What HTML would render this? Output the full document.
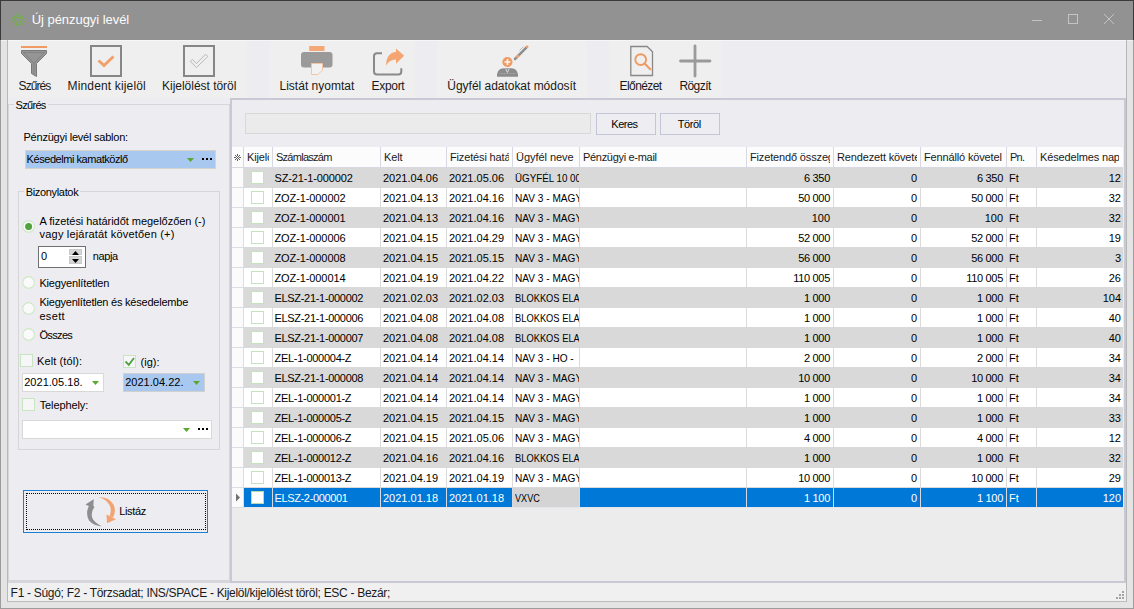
<!DOCTYPE html>
<html><head><meta charset="utf-8"><style>
html,body{margin:0;padding:0;}
body{width:1134px;height:609px;position:relative;overflow:hidden;font-family:"Liberation Sans", sans-serif;}
body>div,body>svg{position:absolute;}
.t{white-space:nowrap;line-height:20px;}
.c{white-space:nowrap;line-height:20px;height:20px;overflow:hidden;}
</style></head><body>
<div style="left:0px;top:0px;width:1134px;height:609px;background:#e4e4e4;"></div>
<div style="left:0px;top:0px;width:1134px;height:40px;background:#929292;"></div>
<div style="left:0px;top:0px;width:1px;height:40px;background:#3a3a3a;"></div>
<div style="left:1133px;top:0px;width:1px;height:40px;background:#3a3a3a;"></div>
<div style="left:0px;top:0px;width:1134px;height:1px;background:#3a3a3a;"></div>
<div style="left:0px;top:40px;width:1px;height:569px;background:#9c9c9c;"></div>
<div style="left:1133px;top:40px;width:1px;height:569px;background:#9c9c9c;"></div>
<div style="left:0px;top:608px;width:1134px;height:1px;background:#9c9c9c;"></div>
<div style="left:1px;top:40px;width:1132px;height:1px;background:#f2f2f2;"></div>
<div style="left:7px;top:40px;width:1px;height:562px;background:#b8b8b8;"></div>
<div style="left:1126px;top:40px;width:1px;height:562px;background:#b8b8b8;"></div>
<div style="left:7px;top:601px;width:1120px;height:1px;background:#bcbcbc;"></div>
<svg style="left:10px;top:12px;width:16px;height:16px" width="16" height="16" viewBox="10 12 16 16">
<g fill="#6cb33f"><circle cx="16.6" cy="14.4" r="0.9"/><circle cx="19.6" cy="14.4" r="0.9"/>
<circle cx="11.9" cy="21.6" r="0.9"/><circle cx="13.5" cy="24.1" r="0.9"/><circle cx="23.9" cy="21.6" r="0.9"/><circle cx="22.4" cy="24.1" r="0.9"/></g>
<g fill="none" stroke="#6cb33f" stroke-width="1.3" stroke-linecap="round">
<path d="M13.6 16.4 Q18 19.2 22.6 16.4"/>
<path d="M11.9 18.5 Q16.3 19.8 16.5 25.3"/>
<path d="M24 18.5 Q19.6 19.8 19.4 25.3"/>
</g></svg>
<div class="t" style="left:31.7px;top:9.50px;font-size:13px;color:#fcfcfc;letter-spacing:-0.044px;">Új pénzugyi levél</div>
<div style="left:1032px;top:20px;width:10px;height:1px;background:#c4c4c4;"></div>
<div style="left:1068px;top:14px;width:10px;height:10px;border:1px solid #c4c4c4;box-sizing:border-box;"></div>
<svg style="left:1103px;top:13px;width:12px;height:12px" width="12" height="12" viewBox="0 0 12 12"><path d="M1 1L11 11M11 1L1 11" stroke="#c4c4c4" stroke-width="1"/></svg>
<div style="left:8px;top:41px;width:1118px;height:57px;background:#efefef;"></div>
<div style="left:8px;top:40px;width:1118px;height:1px;background:#f7f7f7;"></div>
<div style="left:247px;top:41px;width:22px;height:57px;background:#ededf1;"></div>
<div style="left:415px;top:41px;width:22px;height:57px;background:#ededf1;"></div>
<div style="left:587px;top:41px;width:22px;height:57px;background:#ededf1;"></div>
<div style="left:722px;top:41px;width:404px;height:57px;background:#ededf1;"></div>
<div class="t" style="left:18.6px;top:75.84px;font-size:12px;color:#1a1a1a;letter-spacing:-0.920px;">Szűrés</div>
<div class="t" style="left:67.5px;top:75.84px;font-size:12px;color:#1a1a1a;letter-spacing:0.157px;">Mindent kijelöl</div>
<div class="t" style="left:162px;top:75.84px;font-size:12px;color:#1a1a1a;letter-spacing:-0.020px;">Kijelölést töröl</div>
<div class="t" style="left:279.5px;top:75.84px;font-size:12px;color:#1a1a1a;letter-spacing:0.008px;">Listát nyomtat</div>
<div class="t" style="left:371.5px;top:75.84px;font-size:12px;color:#1a1a1a;letter-spacing:-0.300px;">Export</div>
<div class="t" style="left:447.3px;top:75.84px;font-size:12px;color:#1a1a1a;letter-spacing:-0.023px;">Ügyfél adatokat módosít</div>
<div class="t" style="left:619.5px;top:75.84px;font-size:12px;color:#1a1a1a;letter-spacing:-0.571px;">Előnézet</div>
<div class="t" style="left:679.4px;top:75.84px;font-size:12px;color:#1a1a1a;letter-spacing:-0.560px;">Rögzít</div>
<svg style="left:0;top:0;width:1134px;height:98px" width="1134" height="98" viewBox="0 0 1134 98">
<!-- funnel -->
<rect x="21" y="46" width="26" height="2" fill="#f09a66"/>
<path d="M21.5 50.5 H46.5 V53.5 L36.5 63.5 V76.5 L31.5 73.5 V63.5 L21.5 53.5 Z" fill="#959595" stroke="#787878" stroke-width="1"/>
<path d="M23.5 52.5 H44.5 L34 63 V74" fill="none" stroke="#828282" stroke-width="1"/>
<path d="M23.5 52.5 L34 63" fill="none" stroke="#828282" stroke-width="1"/>
<!-- check 1 -->
<rect x="91" y="46" width="30" height="30" fill="none" stroke="#868686" stroke-width="2"/>
<path d="M98.5 60.5 L104 65.5 L113.5 56.5" fill="none" stroke="#f2a06c" stroke-width="3"/>
<!-- check 2 -->
<rect x="184" y="46" width="30" height="30" fill="none" stroke="#868686" stroke-width="2"/>
<path d="M190.3 61.4 L196.4 67.6 L207.8 56.5 L205.6 54.2 L196.4 63.6 L192.5 59.5 Z" fill="none" stroke="#b8b8b8" stroke-width="1"/>
<!-- printer -->
<rect x="309.2" y="46" width="15.3" height="5" fill="#f4a777"/>
<rect x="301" y="52" width="31.5" height="15.5" rx="3" fill="#9a9a9a"/>
<path d="M311.5 63.5 H322.5 V70 L318 74.5 H311.5 Z" fill="#f2f2f2" stroke="#f5c4a2" stroke-width="1"/>
<!-- export -->
<path d="M382 53.2 H377 Q374 53.2 374 56.2 V71.5 Q374 74.5 377 74.5 H398.3 Q401.3 74.5 401.3 71.5 V68.3" fill="none" stroke="#8a8a8a" stroke-width="2"/>
<path d="M396 48.5 L404.2 55.8 L396 63.8 V59.5 Q389.5 59.5 386 65.5 Q386.5 52.5 396 52 Z" fill="#f4a572"/>
<!-- person with pen -->
<path d="M497 76.8 Q496.8 70.5 501 68.8 Q502 68.3 504 68.3 H511 Q513 68.3 514 68.8 Q518.2 70.5 518 76.8 Z" fill="#8c8c8c"/>
<path d="M505.6 68.5 L507.4 72.5 L509.2 68.5" fill="none" stroke="#d8d8d8" stroke-width="1"/>
<path d="M499.5 73.5 H515.5" stroke="#9c9c9c" stroke-width="1"/>
<circle cx="507.4" cy="62" r="5.1" fill="#f09a62"/>
<path d="M504.5 62 H510.5 M507.5 59 V65" stroke="#fff3ea" stroke-width="1.7"/>
<path d="M515 59 L526.8 47.2" stroke="#8e8e8e" stroke-width="2.5" stroke-linecap="round"/>
<path d="M516.4 57.6 L518.8 55.2" stroke="#f0a070" stroke-width="2.5"/>
<circle cx="527.2" cy="46.8" r="1.3" fill="#f0a070"/>
<path d="M519.5 50.5 L523.5 46.5" stroke="#b0b0b0" stroke-width="0.8"/>
<!-- preview doc -->
<path d="M630.8 46.5 H647.2 L652.5 51.8 V75.5 H630.8 Z" fill="none" stroke="#888" stroke-width="1.3"/>
<circle cx="640.7" cy="59.6" r="5.4" fill="none" stroke="#f09a62" stroke-width="1.9"/>
<path d="M644.6 63.6 L650.3 69.3" stroke="#f09a62" stroke-width="2.1" stroke-linecap="round"/>
<!-- plus -->
<path d="M680.5 61 H710 M695 46 V76" stroke="#9a9a9a" stroke-width="2.8" stroke-linecap="round"/>
</svg>
<div style="left:8px;top:98px;width:1118px;height:483px;background:#ededf1;"></div>
<div style="left:8px;top:581px;width:1118px;height:2px;background:#d6d6de;"></div>
<div style="left:8px;top:583px;width:1118px;height:18px;background:#f0f0f0;"></div>
<div class="t" style="left:10.6px;top:582.84px;font-size:12px;color:#1a1a1a;letter-spacing:-0.297px;">F1 - Súgó; F2 - Törzsadat; INS/SPACE - Kijelöl/kijelölést töröl; ESC - Bezár;</div>
<div style="left:1122px;top:591px;width:2px;height:2px;background:#a4a4a4;"></div>
<div style="left:1119px;top:594px;width:2px;height:2px;background:#a4a4a4;"></div>
<div style="left:1122px;top:594px;width:2px;height:2px;background:#a4a4a4;"></div>
<div style="left:1116px;top:597px;width:2px;height:2px;background:#a4a4a4;"></div>
<div style="left:1119px;top:597px;width:2px;height:2px;background:#a4a4a4;"></div>
<div style="left:1122px;top:597px;width:2px;height:2px;background:#a4a4a4;"></div>
<div style="left:8px;top:104px;width:222px;height:477px;border:1px solid #d6d6d6;box-sizing:border-box;"></div>
<div style="left:14px;top:99px;width:34px;height:10px;background:#ededf1;"></div>
<div class="t" style="left:15.6px;top:95.19px;font-size:11px;color:#000;letter-spacing:-0.700px;">Szűrés</div>
<div class="t" style="left:23.5px;top:127.19px;font-size:11px;color:#000;letter-spacing:-0.229px;">Pénzügyi levél sablon:</div>
<div style="left:25px;top:150px;width:191px;height:19px;background:#a8c8f0;border:1px solid #d6d2cc;box-sizing:border-box;"></div>
<div class="t" style="left:26.6px;top:149.19px;font-size:11px;color:#000;letter-spacing:-0.447px;">Késedelmi kamatközlő</div>
<svg style="left:186px;top:157px;width:9px;height:6px" width="9" height="6" viewBox="0 0 9 6"><path d="M1 1H8L4.5 5Z" fill="#5aa832"/></svg>
<div style="left:202px;top:158px;width:2px;height:2px;background:#000;"></div>
<div style="left:206px;top:158px;width:2px;height:2px;background:#000;"></div>
<div style="left:210px;top:158px;width:2px;height:2px;background:#000;"></div>
<div style="left:18px;top:191px;width:202px;height:259px;border:1px solid #d6d6d6;box-sizing:border-box;"></div>
<div style="left:24px;top:185px;width:56px;height:10px;background:#ededf1;"></div>
<div class="t" style="left:25.7px;top:182.19px;font-size:11px;color:#000;letter-spacing:-0.330px;">Bizonylatok</div>
<svg style="left:21px;top:219px;width:16px;height:16px" width="16" height="16" viewBox="0 0 16 16"><circle cx="7.60" cy="7.40" r="5.8" fill="#fafafa" stroke="#cce8c4" stroke-width="1.1"/><circle cx="7.60" cy="7.40" r="3.5" fill="#52a23e"/></svg>
<div class="t" style="left:39.6px;top:210.69px;font-size:11px;color:#000;letter-spacing:-0.035px;">A fizetési határidőt megelőzően (-)</div>
<div class="t" style="left:39.6px;top:223.69px;font-size:11px;color:#000;letter-spacing:0.185px;">vagy lejáratát követően (+)</div>
<div style="left:38px;top:246px;width:48px;height:22px;background:#fff;border:1px solid #707070;box-sizing:border-box;"></div>
<div style="left:69px;top:249px;width:13px;height:6px;background:#d6d6d6;border:1px solid #cacaca;box-sizing:border-box;"></div>
<div style="left:69px;top:256px;width:13px;height:8px;background:#d6d6d6;border:1px solid #cacaca;box-sizing:border-box;"></div>
<svg style="left:69px;top:249px;width:13px;height:15px" width="13" height="15" viewBox="69 249 13 15"><path d="M72 255H79L75.5 251Z" fill="#000"/><path d="M72 259H79L75.5 263Z" fill="#000"/></svg>
<div class="t" style="left:41px;top:246.19px;font-size:11px;color:#000;">0</div>
<div class="t" style="left:92.7px;top:246.19px;font-size:11px;color:#000;letter-spacing:-0.375px;">napja</div>
<svg style="left:21px;top:275px;width:16px;height:16px" width="16" height="16" viewBox="0 0 16 16"><circle cx="7.60" cy="7.40" r="5.8" fill="#fafafa" stroke="#cce8c4" stroke-width="1.1"/></svg>
<div class="t" style="left:39.4px;top:273.19px;font-size:11px;color:#000;letter-spacing:-0.157px;">Kiegyenlítetlen</div>
<svg style="left:21px;top:301px;width:16px;height:16px" width="16" height="16" viewBox="0 0 16 16"><circle cx="7.60" cy="7.40" r="5.8" fill="#fafafa" stroke="#cce8c4" stroke-width="1.1"/></svg>
<div class="t" style="left:39.4px;top:292.19px;font-size:11px;color:#000;letter-spacing:-0.221px;">Kiegyenlítetlen és késedelembe</div>
<div class="t" style="left:39.4px;top:306.19px;font-size:11px;color:#000;letter-spacing:0.350px;">esett</div>
<svg style="left:21px;top:327px;width:16px;height:16px" width="16" height="16" viewBox="0 0 16 16"><circle cx="7.60" cy="7.40" r="5.8" fill="#fafafa" stroke="#cce8c4" stroke-width="1.1"/></svg>
<div class="t" style="left:39.4px;top:325.19px;font-size:11px;color:#000;letter-spacing:-0.640px;">Összes</div>
<div style="left:20px;top:354px;width:13px;height:13px;background:#f6f6f8;border:1px solid #c8e4c0;box-sizing:border-box;"></div>
<div class="t" style="left:37px;top:351.19px;font-size:11px;color:#000;letter-spacing:0.100px;">Kelt (tól):</div>
<div style="left:123px;top:355px;width:13px;height:13px;background:#f6f6f8;border:1px solid #c8e4c0;box-sizing:border-box;"></div>
<svg style="left:123px;top:355px;width:13px;height:13px" width="13" height="13" viewBox="123 355 13 13"><path d="M125.5 361.5L128.8 364.8L134 358" fill="none" stroke="#4ca43c" stroke-width="1.8"/></svg>
<div class="t" style="left:140.6px;top:352.19px;font-size:11px;color:#000;letter-spacing:0.000px;">(ig):</div>
<div style="left:22px;top:373px;width:82px;height:19px;background:#fff;border:1px solid #d8d8d8;box-sizing:border-box;"></div>
<div class="t" style="left:24.2px;top:372.19px;font-size:11px;color:#000;letter-spacing:0.030px;">2021.05.18.</div>
<svg style="left:91px;top:380px;width:9px;height:6px" width="9" height="6" viewBox="0 0 9 6"><path d="M1 1H8L4.5 5Z" fill="#5aa832"/></svg>
<div style="left:123px;top:373px;width:82px;height:19px;background:#a8c8f0;border:1px solid #d0d0d0;box-sizing:border-box;"></div>
<div class="t" style="left:125.2px;top:372.19px;font-size:11px;color:#000;letter-spacing:0.020px;">2021.04.22.</div>
<svg style="left:192px;top:380px;width:9px;height:6px" width="9" height="6" viewBox="0 0 9 6"><path d="M1 1H8L4.5 5Z" fill="#5aa832"/></svg>
<div style="left:22px;top:398px;width:13px;height:13px;background:#f6f6f8;border:1px solid #c8e4c0;box-sizing:border-box;"></div>
<div class="t" style="left:39.7px;top:395.19px;font-size:11px;color:#000;letter-spacing:-0.111px;">Telephely:</div>
<div style="left:22px;top:420px;width:190px;height:19px;background:#fff;border:1px solid #d8d8d8;box-sizing:border-box;"></div>
<svg style="left:182px;top:427px;width:9px;height:6px" width="9" height="6" viewBox="0 0 9 6"><path d="M1 1H8L4.5 5Z" fill="#5aa832"/></svg>
<div style="left:198px;top:428px;width:2px;height:2px;background:#000;"></div>
<div style="left:202px;top:428px;width:2px;height:2px;background:#000;"></div>
<div style="left:206px;top:428px;width:2px;height:2px;background:#000;"></div>
<div style="left:23px;top:490px;width:185px;height:43px;border:1px solid #1c7fd6;box-sizing:border-box;background:#ededf1;"></div>
<div style="left:26px;top:493px;width:180px;height:37px;border:1px dotted #000;box-sizing:border-box;"></div>
<svg style="left:84px;top:495px;width:34px;height:32px" width="34" height="32" viewBox="84 495 34 32">
<path d="M90.5 503.5 Q84.5 512 89 520.5 Q94 526.2 102 526.2 Q95.5 523.5 92.8 519 Q90 513 94.5 507 Z" fill="#8e8e8e"/>
<path d="M85.5 504.5 L93.7 499.2 L93.2 508.2 Z" fill="#8e8e8e"/>
<path d="M98.5 497.3 Q108.5 496.5 113.5 504.5 Q116.5 510.5 113 517.5 L109.5 516 Q112 510.5 109.5 505 Q106 499 98.5 497.3 Z" fill="#f2a372"/>
<path d="M107 523.3 L116 519.2 L106.5 514.5 Z" fill="#f2a372"/>
</svg>
<div class="t" style="left:119.3px;top:501.19px;font-size:11px;color:#000;letter-spacing:-0.380px;">Listáz</div>
<div style="left:230px;top:98px;width:896px;height:485px;background:#ececec;"></div>
<div style="left:230px;top:98px;width:896px;height:2px;background:#c9c9d5;"></div>
<div style="left:230px;top:98px;width:2px;height:485px;background:#c9c9d5;"></div>
<div style="left:1124px;top:98px;width:2px;height:485px;background:#c9c9d5;"></div>
<div style="left:230px;top:581px;width:896px;height:2px;background:#c9c9d5;"></div>
<div style="left:232px;top:100px;width:892px;height:47px;background:#ededf1;"></div>
<div style="left:245px;top:113px;width:346px;height:21px;background:#ebebeb;border:1px solid #d8d8d8;box-sizing:border-box;"></div>
<div style="left:596px;top:113px;width:60px;height:22px;background:#ededf2;border:1px solid #c4c6d8;box-sizing:border-box;"></div>
<div class="t" style="left:611.3px;top:114.19px;font-size:11px;color:#000;letter-spacing:-0.500px;">Keres</div>
<div style="left:660px;top:113px;width:60px;height:22px;background:#ededf2;border:1px solid #c4c6d8;box-sizing:border-box;"></div>
<div class="t" style="left:677.7px;top:114.19px;font-size:11px;color:#000;letter-spacing:-0.375px;">Töröl</div>
<div style="left:232px;top:147px;width:891px;height:20px;background:#fcfcfd;"></div>
<div style="left:232px;top:167px;width:891px;height:1px;background:#d8d8e2;"></div>
<div style="left:243px;top:147px;width:1px;height:20px;background:#d8d8e2;"></div>
<div style="left:272px;top:147px;width:1px;height:20px;background:#d8d8e2;"></div>
<div style="left:380px;top:147px;width:1px;height:20px;background:#d8d8e2;"></div>
<div style="left:446px;top:147px;width:1px;height:20px;background:#d8d8e2;"></div>
<div style="left:512px;top:147px;width:1px;height:20px;background:#d8d8e2;"></div>
<div style="left:579px;top:147px;width:1px;height:20px;background:#d8d8e2;"></div>
<div style="left:746px;top:147px;width:1px;height:20px;background:#d8d8e2;"></div>
<div style="left:833px;top:147px;width:1px;height:20px;background:#d8d8e2;"></div>
<div style="left:920px;top:147px;width:1px;height:20px;background:#d8d8e2;"></div>
<div style="left:1006px;top:147px;width:1px;height:20px;background:#d8d8e2;"></div>
<div style="left:1036px;top:147px;width:1px;height:20px;background:#d8d8e2;"></div>
<div class="c" style="left:244px;top:147.19px;width:25px;font-size:11px;color:#1a1a1a;"><span style="position:absolute;left:3px;top:0;letter-spacing:-0.15px;">Kijelölés</span></div>
<div class="c" style="left:273px;top:147.19px;width:104px;font-size:11px;color:#1a1a1a;"><span style="position:absolute;left:3px;top:0;letter-spacing:-0.733px;">Számlaszám</span></div>
<div class="c" style="left:381px;top:147.19px;width:62px;font-size:11px;color:#1a1a1a;"><span style="position:absolute;left:3px;top:0;letter-spacing:-0.133px;">Kelt</span></div>
<div class="c" style="left:447px;top:147.19px;width:62px;font-size:11px;color:#1a1a1a;"><span style="position:absolute;left:3px;top:0;letter-spacing:-0.15px;">Fizetési határidő</span></div>
<div class="c" style="left:513px;top:147.19px;width:63px;font-size:11px;color:#1a1a1a;"><span style="position:absolute;left:3px;top:0;letter-spacing:-0.050px;">Ügyfél neve</span></div>
<div class="c" style="left:580px;top:147.19px;width:163px;font-size:11px;color:#1a1a1a;"><span style="position:absolute;left:3px;top:0;letter-spacing:-0.307px;">Pénzügyi e-mail</span></div>
<div class="c" style="left:747px;top:147.19px;width:83px;font-size:11px;color:#1a1a1a;"><span style="position:absolute;left:3px;top:0;letter-spacing:-0.15px;">Fizetendő összeg</span></div>
<div class="c" style="left:834px;top:147.19px;width:83px;font-size:11px;color:#1a1a1a;"><span style="position:absolute;left:3px;top:0;letter-spacing:-0.15px;">Rendezett követelés</span></div>
<div class="c" style="left:921px;top:147.19px;width:83px;font-size:11px;color:#1a1a1a;"><span style="position:absolute;left:3px;top:0;letter-spacing:-0.15px;">Fennálló követel</span></div>
<div class="c" style="left:1007px;top:147.19px;width:26px;font-size:11px;color:#1a1a1a;"><span style="position:absolute;left:3px;top:0;letter-spacing:-0.750px;">Pn.</span></div>
<div class="c" style="left:1037px;top:147.19px;width:82px;font-size:11px;color:#1a1a1a;"><span style="position:absolute;left:3px;top:0;letter-spacing:-0.15px;">Késedelmes napok</span></div>
<svg style="left:233px;top:153px;width:9px;height:9px" width="9" height="9" viewBox="0 0 9 9" shape-rendering="crispEdges"><g fill="#5e5e5e"><rect x="4" y="1" width="1" height="1"/><rect x="2" y="2" width="1" height="1"/><rect x="4" y="2" width="1" height="1"/><rect x="6" y="2" width="1" height="1"/><rect x="3" y="3" width="1" height="1"/><rect x="5" y="3" width="1" height="1"/><rect x="1" y="4" width="1" height="1"/><rect x="2" y="4" width="1" height="1"/><rect x="4" y="4" width="1" height="1"/><rect x="6" y="4" width="1" height="1"/><rect x="7" y="4" width="1" height="1"/><rect x="3" y="5" width="1" height="1"/><rect x="5" y="5" width="1" height="1"/><rect x="2" y="6" width="1" height="1"/><rect x="4" y="6" width="1" height="1"/><rect x="6" y="6" width="1" height="1"/><rect x="4" y="7" width="1" height="1"/></g></svg>
<div style="left:232px;top:168px;width:11px;height:19px;background:#fbfbfc;"></div>
<div style="left:232px;top:187px;width:11px;height:1px;background:#dcdce6;"></div>
<div style="left:243px;top:168px;width:1px;height:20px;background:#dcdce6;"></div>
<div style="left:244px;top:168px;width:879px;height:20px;background:#d9d9d9;"></div>
<div style="left:244px;top:187px;width:879px;height:1px;background:#d9d9d9;"></div>
<div style="left:251px;top:171px;width:13px;height:13px;background:#fff;border:1px solid #c4e2bc;box-sizing:border-box;"></div>
<div class="c" style="left:273px;top:168.19px;width:107px;font-size:11px;color:#000;"><span style="position:absolute;left:1.5px;top:0;letter-spacing:-0.13px;">SZ-21-1-000002</span></div>
<div class="c" style="left:381px;top:168.19px;width:65px;font-size:11px;color:#000;"><span style="position:absolute;left:2px;top:0;">2021.04.06</span></div>
<div class="c" style="left:447px;top:168.19px;width:65px;font-size:11px;color:#000;"><span style="position:absolute;left:2px;top:0;">2021.05.06</span></div>
<div class="c" style="left:513px;top:168.19px;width:66px;font-size:11px;color:#000;"><span style="position:absolute;left:2px;top:0;transform:scaleX(0.888235294117647);transform-origin:0 0;">ÜGYFÉL 10 000</span></div>
<div class="c" style="left:747px;top:168.19px;width:86px;font-size:11px;color:#000;"><span style="position:absolute;right:3px;top:0;letter-spacing:-0.3px;">6 350</span></div>
<div class="c" style="left:834px;top:168.19px;width:86px;font-size:11px;color:#000;"><span style="position:absolute;right:3px;top:0;">0</span></div>
<div class="c" style="left:921px;top:168.19px;width:85px;font-size:11px;color:#000;"><span style="position:absolute;right:3px;top:0;letter-spacing:-0.3px;">6 350</span></div>
<div class="c" style="left:1007px;top:168.19px;width:29px;font-size:11px;color:#000;"><span style="position:absolute;left:2px;top:0;">Ft</span></div>
<div class="c" style="left:1037px;top:168.19px;width:86px;font-size:11px;color:#000;"><span style="position:absolute;right:2px;top:0;">12</span></div>
<div style="left:232px;top:188px;width:11px;height:19px;background:#fbfbfc;"></div>
<div style="left:232px;top:207px;width:11px;height:1px;background:#dcdce6;"></div>
<div style="left:243px;top:188px;width:1px;height:20px;background:#dcdce6;"></div>
<div style="left:244px;top:188px;width:879px;height:20px;background:#ffffff;"></div>
<div style="left:244px;top:207px;width:879px;height:1px;background:#d9d9d9;"></div>
<div style="left:272px;top:188px;width:1px;height:19px;background:#dadada;"></div>
<div style="left:380px;top:188px;width:1px;height:19px;background:#dadada;"></div>
<div style="left:446px;top:188px;width:1px;height:19px;background:#dadada;"></div>
<div style="left:512px;top:188px;width:1px;height:19px;background:#dadada;"></div>
<div style="left:579px;top:188px;width:1px;height:19px;background:#dadada;"></div>
<div style="left:746px;top:188px;width:1px;height:19px;background:#dadada;"></div>
<div style="left:833px;top:188px;width:1px;height:19px;background:#dadada;"></div>
<div style="left:920px;top:188px;width:1px;height:19px;background:#dadada;"></div>
<div style="left:1006px;top:188px;width:1px;height:19px;background:#dadada;"></div>
<div style="left:1036px;top:188px;width:1px;height:19px;background:#dadada;"></div>
<div style="left:251px;top:191px;width:13px;height:13px;background:#fff;border:1px solid #c4e2bc;box-sizing:border-box;"></div>
<div class="c" style="left:273px;top:188.19px;width:107px;font-size:11px;color:#000;"><span style="position:absolute;left:1.5px;top:0;letter-spacing:-0.1px;">ZOZ-1-000002</span></div>
<div class="c" style="left:381px;top:188.19px;width:65px;font-size:11px;color:#000;"><span style="position:absolute;left:2px;top:0;">2021.04.13</span></div>
<div class="c" style="left:447px;top:188.19px;width:65px;font-size:11px;color:#000;"><span style="position:absolute;left:2px;top:0;">2021.04.16</span></div>
<div class="c" style="left:513px;top:188.19px;width:66px;font-size:11px;color:#000;"><span style="position:absolute;left:2px;top:0;transform:scaleX(0.9181818181818182);transform-origin:0 0;">NAV 3 - MAGYAR</span></div>
<div class="c" style="left:747px;top:188.19px;width:86px;font-size:11px;color:#000;"><span style="position:absolute;right:3px;top:0;letter-spacing:-0.3px;">50 000</span></div>
<div class="c" style="left:834px;top:188.19px;width:86px;font-size:11px;color:#000;"><span style="position:absolute;right:3px;top:0;">0</span></div>
<div class="c" style="left:921px;top:188.19px;width:85px;font-size:11px;color:#000;"><span style="position:absolute;right:3px;top:0;letter-spacing:-0.3px;">50 000</span></div>
<div class="c" style="left:1007px;top:188.19px;width:29px;font-size:11px;color:#000;"><span style="position:absolute;left:2px;top:0;">Ft</span></div>
<div class="c" style="left:1037px;top:188.19px;width:86px;font-size:11px;color:#000;"><span style="position:absolute;right:2px;top:0;">32</span></div>
<div style="left:232px;top:208px;width:11px;height:19px;background:#fbfbfc;"></div>
<div style="left:232px;top:227px;width:11px;height:1px;background:#dcdce6;"></div>
<div style="left:243px;top:208px;width:1px;height:20px;background:#dcdce6;"></div>
<div style="left:244px;top:208px;width:879px;height:20px;background:#d9d9d9;"></div>
<div style="left:244px;top:227px;width:879px;height:1px;background:#d9d9d9;"></div>
<div style="left:251px;top:211px;width:13px;height:13px;background:#fff;border:1px solid #c4e2bc;box-sizing:border-box;"></div>
<div class="c" style="left:273px;top:208.19px;width:107px;font-size:11px;color:#000;"><span style="position:absolute;left:1.5px;top:0;letter-spacing:-0.1px;">ZOZ-1-000001</span></div>
<div class="c" style="left:381px;top:208.19px;width:65px;font-size:11px;color:#000;"><span style="position:absolute;left:2px;top:0;">2021.04.13</span></div>
<div class="c" style="left:447px;top:208.19px;width:65px;font-size:11px;color:#000;"><span style="position:absolute;left:2px;top:0;">2021.04.16</span></div>
<div class="c" style="left:513px;top:208.19px;width:66px;font-size:11px;color:#000;"><span style="position:absolute;left:2px;top:0;transform:scaleX(0.9181818181818182);transform-origin:0 0;">NAV 3 - MAGYAR</span></div>
<div class="c" style="left:747px;top:208.19px;width:86px;font-size:11px;color:#000;"><span style="position:absolute;right:3px;top:0;">100</span></div>
<div class="c" style="left:834px;top:208.19px;width:86px;font-size:11px;color:#000;"><span style="position:absolute;right:3px;top:0;">0</span></div>
<div class="c" style="left:921px;top:208.19px;width:85px;font-size:11px;color:#000;"><span style="position:absolute;right:3px;top:0;">100</span></div>
<div class="c" style="left:1007px;top:208.19px;width:29px;font-size:11px;color:#000;"><span style="position:absolute;left:2px;top:0;">Ft</span></div>
<div class="c" style="left:1037px;top:208.19px;width:86px;font-size:11px;color:#000;"><span style="position:absolute;right:2px;top:0;">32</span></div>
<div style="left:232px;top:228px;width:11px;height:19px;background:#fbfbfc;"></div>
<div style="left:232px;top:247px;width:11px;height:1px;background:#dcdce6;"></div>
<div style="left:243px;top:228px;width:1px;height:20px;background:#dcdce6;"></div>
<div style="left:244px;top:228px;width:879px;height:20px;background:#ffffff;"></div>
<div style="left:244px;top:247px;width:879px;height:1px;background:#d9d9d9;"></div>
<div style="left:272px;top:228px;width:1px;height:19px;background:#dadada;"></div>
<div style="left:380px;top:228px;width:1px;height:19px;background:#dadada;"></div>
<div style="left:446px;top:228px;width:1px;height:19px;background:#dadada;"></div>
<div style="left:512px;top:228px;width:1px;height:19px;background:#dadada;"></div>
<div style="left:579px;top:228px;width:1px;height:19px;background:#dadada;"></div>
<div style="left:746px;top:228px;width:1px;height:19px;background:#dadada;"></div>
<div style="left:833px;top:228px;width:1px;height:19px;background:#dadada;"></div>
<div style="left:920px;top:228px;width:1px;height:19px;background:#dadada;"></div>
<div style="left:1006px;top:228px;width:1px;height:19px;background:#dadada;"></div>
<div style="left:1036px;top:228px;width:1px;height:19px;background:#dadada;"></div>
<div style="left:251px;top:231px;width:13px;height:13px;background:#fff;border:1px solid #c4e2bc;box-sizing:border-box;"></div>
<div class="c" style="left:273px;top:228.19px;width:107px;font-size:11px;color:#000;"><span style="position:absolute;left:1.5px;top:0;letter-spacing:-0.1px;">ZOZ-1-000006</span></div>
<div class="c" style="left:381px;top:228.19px;width:65px;font-size:11px;color:#000;"><span style="position:absolute;left:2px;top:0;">2021.04.15</span></div>
<div class="c" style="left:447px;top:228.19px;width:65px;font-size:11px;color:#000;"><span style="position:absolute;left:2px;top:0;">2021.04.29</span></div>
<div class="c" style="left:513px;top:228.19px;width:66px;font-size:11px;color:#000;"><span style="position:absolute;left:2px;top:0;transform:scaleX(0.9181818181818182);transform-origin:0 0;">NAV 3 - MAGYAR</span></div>
<div class="c" style="left:747px;top:228.19px;width:86px;font-size:11px;color:#000;"><span style="position:absolute;right:3px;top:0;letter-spacing:-0.3px;">52 000</span></div>
<div class="c" style="left:834px;top:228.19px;width:86px;font-size:11px;color:#000;"><span style="position:absolute;right:3px;top:0;">0</span></div>
<div class="c" style="left:921px;top:228.19px;width:85px;font-size:11px;color:#000;"><span style="position:absolute;right:3px;top:0;letter-spacing:-0.3px;">52 000</span></div>
<div class="c" style="left:1007px;top:228.19px;width:29px;font-size:11px;color:#000;"><span style="position:absolute;left:2px;top:0;">Ft</span></div>
<div class="c" style="left:1037px;top:228.19px;width:86px;font-size:11px;color:#000;"><span style="position:absolute;right:2px;top:0;">19</span></div>
<div style="left:232px;top:248px;width:11px;height:19px;background:#fbfbfc;"></div>
<div style="left:232px;top:267px;width:11px;height:1px;background:#dcdce6;"></div>
<div style="left:243px;top:248px;width:1px;height:20px;background:#dcdce6;"></div>
<div style="left:244px;top:248px;width:879px;height:20px;background:#d9d9d9;"></div>
<div style="left:244px;top:267px;width:879px;height:1px;background:#d9d9d9;"></div>
<div style="left:251px;top:251px;width:13px;height:13px;background:#fff;border:1px solid #c4e2bc;box-sizing:border-box;"></div>
<div class="c" style="left:273px;top:248.19px;width:107px;font-size:11px;color:#000;"><span style="position:absolute;left:1.5px;top:0;letter-spacing:-0.1px;">ZOZ-1-000008</span></div>
<div class="c" style="left:381px;top:248.19px;width:65px;font-size:11px;color:#000;"><span style="position:absolute;left:2px;top:0;">2021.04.15</span></div>
<div class="c" style="left:447px;top:248.19px;width:65px;font-size:11px;color:#000;"><span style="position:absolute;left:2px;top:0;">2021.05.15</span></div>
<div class="c" style="left:513px;top:248.19px;width:66px;font-size:11px;color:#000;"><span style="position:absolute;left:2px;top:0;transform:scaleX(0.9181818181818182);transform-origin:0 0;">NAV 3 - MAGYAR</span></div>
<div class="c" style="left:747px;top:248.19px;width:86px;font-size:11px;color:#000;"><span style="position:absolute;right:3px;top:0;letter-spacing:-0.3px;">56 000</span></div>
<div class="c" style="left:834px;top:248.19px;width:86px;font-size:11px;color:#000;"><span style="position:absolute;right:3px;top:0;">0</span></div>
<div class="c" style="left:921px;top:248.19px;width:85px;font-size:11px;color:#000;"><span style="position:absolute;right:3px;top:0;letter-spacing:-0.3px;">56 000</span></div>
<div class="c" style="left:1007px;top:248.19px;width:29px;font-size:11px;color:#000;"><span style="position:absolute;left:2px;top:0;">Ft</span></div>
<div class="c" style="left:1037px;top:248.19px;width:86px;font-size:11px;color:#000;"><span style="position:absolute;right:2px;top:0;">3</span></div>
<div style="left:232px;top:268px;width:11px;height:19px;background:#fbfbfc;"></div>
<div style="left:232px;top:287px;width:11px;height:1px;background:#dcdce6;"></div>
<div style="left:243px;top:268px;width:1px;height:20px;background:#dcdce6;"></div>
<div style="left:244px;top:268px;width:879px;height:20px;background:#ffffff;"></div>
<div style="left:244px;top:287px;width:879px;height:1px;background:#d9d9d9;"></div>
<div style="left:272px;top:268px;width:1px;height:19px;background:#dadada;"></div>
<div style="left:380px;top:268px;width:1px;height:19px;background:#dadada;"></div>
<div style="left:446px;top:268px;width:1px;height:19px;background:#dadada;"></div>
<div style="left:512px;top:268px;width:1px;height:19px;background:#dadada;"></div>
<div style="left:579px;top:268px;width:1px;height:19px;background:#dadada;"></div>
<div style="left:746px;top:268px;width:1px;height:19px;background:#dadada;"></div>
<div style="left:833px;top:268px;width:1px;height:19px;background:#dadada;"></div>
<div style="left:920px;top:268px;width:1px;height:19px;background:#dadada;"></div>
<div style="left:1006px;top:268px;width:1px;height:19px;background:#dadada;"></div>
<div style="left:1036px;top:268px;width:1px;height:19px;background:#dadada;"></div>
<div style="left:251px;top:271px;width:13px;height:13px;background:#fff;border:1px solid #c4e2bc;box-sizing:border-box;"></div>
<div class="c" style="left:273px;top:268.19px;width:107px;font-size:11px;color:#000;"><span style="position:absolute;left:1.5px;top:0;letter-spacing:-0.1px;">ZOZ-1-000014</span></div>
<div class="c" style="left:381px;top:268.19px;width:65px;font-size:11px;color:#000;"><span style="position:absolute;left:2px;top:0;">2021.04.19</span></div>
<div class="c" style="left:447px;top:268.19px;width:65px;font-size:11px;color:#000;"><span style="position:absolute;left:2px;top:0;">2021.04.22</span></div>
<div class="c" style="left:513px;top:268.19px;width:66px;font-size:11px;color:#000;"><span style="position:absolute;left:2px;top:0;transform:scaleX(0.9181818181818182);transform-origin:0 0;">NAV 3 - MAGYAR</span></div>
<div class="c" style="left:747px;top:268.19px;width:86px;font-size:11px;color:#000;"><span style="position:absolute;right:3px;top:0;letter-spacing:-0.3px;">110 005</span></div>
<div class="c" style="left:834px;top:268.19px;width:86px;font-size:11px;color:#000;"><span style="position:absolute;right:3px;top:0;">0</span></div>
<div class="c" style="left:921px;top:268.19px;width:85px;font-size:11px;color:#000;"><span style="position:absolute;right:3px;top:0;letter-spacing:-0.3px;">110 005</span></div>
<div class="c" style="left:1007px;top:268.19px;width:29px;font-size:11px;color:#000;"><span style="position:absolute;left:2px;top:0;">Ft</span></div>
<div class="c" style="left:1037px;top:268.19px;width:86px;font-size:11px;color:#000;"><span style="position:absolute;right:2px;top:0;">26</span></div>
<div style="left:232px;top:288px;width:11px;height:19px;background:#fbfbfc;"></div>
<div style="left:232px;top:307px;width:11px;height:1px;background:#dcdce6;"></div>
<div style="left:243px;top:288px;width:1px;height:20px;background:#dcdce6;"></div>
<div style="left:244px;top:288px;width:879px;height:20px;background:#d9d9d9;"></div>
<div style="left:244px;top:307px;width:879px;height:1px;background:#d9d9d9;"></div>
<div style="left:251px;top:291px;width:13px;height:13px;background:#fff;border:1px solid #c4e2bc;box-sizing:border-box;"></div>
<div class="c" style="left:273px;top:288.19px;width:107px;font-size:11px;color:#000;"><span style="position:absolute;left:1.5px;top:0;letter-spacing:-0.31px;">ELSZ-21-1-000002</span></div>
<div class="c" style="left:381px;top:288.19px;width:65px;font-size:11px;color:#000;"><span style="position:absolute;left:2px;top:0;">2021.02.03</span></div>
<div class="c" style="left:447px;top:288.19px;width:65px;font-size:11px;color:#000;"><span style="position:absolute;left:2px;top:0;">2021.02.03</span></div>
<div class="c" style="left:513px;top:288.19px;width:66px;font-size:11px;color:#000;"><span style="position:absolute;left:2px;top:0;transform:scaleX(0.8478260869565217);transform-origin:0 0;">BLOKKOS ELADÁS</span></div>
<div class="c" style="left:747px;top:288.19px;width:86px;font-size:11px;color:#000;"><span style="position:absolute;right:3px;top:0;letter-spacing:-0.3px;">1 000</span></div>
<div class="c" style="left:834px;top:288.19px;width:86px;font-size:11px;color:#000;"><span style="position:absolute;right:3px;top:0;">0</span></div>
<div class="c" style="left:921px;top:288.19px;width:85px;font-size:11px;color:#000;"><span style="position:absolute;right:3px;top:0;letter-spacing:-0.3px;">1 000</span></div>
<div class="c" style="left:1007px;top:288.19px;width:29px;font-size:11px;color:#000;"><span style="position:absolute;left:2px;top:0;">Ft</span></div>
<div class="c" style="left:1037px;top:288.19px;width:86px;font-size:11px;color:#000;"><span style="position:absolute;right:2px;top:0;">104</span></div>
<div style="left:232px;top:308px;width:11px;height:19px;background:#fbfbfc;"></div>
<div style="left:232px;top:327px;width:11px;height:1px;background:#dcdce6;"></div>
<div style="left:243px;top:308px;width:1px;height:20px;background:#dcdce6;"></div>
<div style="left:244px;top:308px;width:879px;height:20px;background:#ffffff;"></div>
<div style="left:244px;top:327px;width:879px;height:1px;background:#d9d9d9;"></div>
<div style="left:272px;top:308px;width:1px;height:19px;background:#dadada;"></div>
<div style="left:380px;top:308px;width:1px;height:19px;background:#dadada;"></div>
<div style="left:446px;top:308px;width:1px;height:19px;background:#dadada;"></div>
<div style="left:512px;top:308px;width:1px;height:19px;background:#dadada;"></div>
<div style="left:579px;top:308px;width:1px;height:19px;background:#dadada;"></div>
<div style="left:746px;top:308px;width:1px;height:19px;background:#dadada;"></div>
<div style="left:833px;top:308px;width:1px;height:19px;background:#dadada;"></div>
<div style="left:920px;top:308px;width:1px;height:19px;background:#dadada;"></div>
<div style="left:1006px;top:308px;width:1px;height:19px;background:#dadada;"></div>
<div style="left:1036px;top:308px;width:1px;height:19px;background:#dadada;"></div>
<div style="left:251px;top:311px;width:13px;height:13px;background:#fff;border:1px solid #c4e2bc;box-sizing:border-box;"></div>
<div class="c" style="left:273px;top:308.19px;width:107px;font-size:11px;color:#000;"><span style="position:absolute;left:1.5px;top:0;letter-spacing:-0.31px;">ELSZ-21-1-000006</span></div>
<div class="c" style="left:381px;top:308.19px;width:65px;font-size:11px;color:#000;"><span style="position:absolute;left:2px;top:0;">2021.04.08</span></div>
<div class="c" style="left:447px;top:308.19px;width:65px;font-size:11px;color:#000;"><span style="position:absolute;left:2px;top:0;">2021.04.08</span></div>
<div class="c" style="left:513px;top:308.19px;width:66px;font-size:11px;color:#000;"><span style="position:absolute;left:2px;top:0;transform:scaleX(0.8478260869565217);transform-origin:0 0;">BLOKKOS ELADÁS</span></div>
<div class="c" style="left:747px;top:308.19px;width:86px;font-size:11px;color:#000;"><span style="position:absolute;right:3px;top:0;letter-spacing:-0.3px;">1 000</span></div>
<div class="c" style="left:834px;top:308.19px;width:86px;font-size:11px;color:#000;"><span style="position:absolute;right:3px;top:0;">0</span></div>
<div class="c" style="left:921px;top:308.19px;width:85px;font-size:11px;color:#000;"><span style="position:absolute;right:3px;top:0;letter-spacing:-0.3px;">1 000</span></div>
<div class="c" style="left:1007px;top:308.19px;width:29px;font-size:11px;color:#000;"><span style="position:absolute;left:2px;top:0;">Ft</span></div>
<div class="c" style="left:1037px;top:308.19px;width:86px;font-size:11px;color:#000;"><span style="position:absolute;right:2px;top:0;">40</span></div>
<div style="left:232px;top:328px;width:11px;height:19px;background:#fbfbfc;"></div>
<div style="left:232px;top:347px;width:11px;height:1px;background:#dcdce6;"></div>
<div style="left:243px;top:328px;width:1px;height:20px;background:#dcdce6;"></div>
<div style="left:244px;top:328px;width:879px;height:20px;background:#d9d9d9;"></div>
<div style="left:244px;top:347px;width:879px;height:1px;background:#d9d9d9;"></div>
<div style="left:251px;top:331px;width:13px;height:13px;background:#fff;border:1px solid #c4e2bc;box-sizing:border-box;"></div>
<div class="c" style="left:273px;top:328.19px;width:107px;font-size:11px;color:#000;"><span style="position:absolute;left:1.5px;top:0;letter-spacing:-0.31px;">ELSZ-21-1-000007</span></div>
<div class="c" style="left:381px;top:328.19px;width:65px;font-size:11px;color:#000;"><span style="position:absolute;left:2px;top:0;">2021.04.08</span></div>
<div class="c" style="left:447px;top:328.19px;width:65px;font-size:11px;color:#000;"><span style="position:absolute;left:2px;top:0;">2021.04.08</span></div>
<div class="c" style="left:513px;top:328.19px;width:66px;font-size:11px;color:#000;"><span style="position:absolute;left:2px;top:0;transform:scaleX(0.8478260869565217);transform-origin:0 0;">BLOKKOS ELADÁS</span></div>
<div class="c" style="left:747px;top:328.19px;width:86px;font-size:11px;color:#000;"><span style="position:absolute;right:3px;top:0;letter-spacing:-0.3px;">1 000</span></div>
<div class="c" style="left:834px;top:328.19px;width:86px;font-size:11px;color:#000;"><span style="position:absolute;right:3px;top:0;">0</span></div>
<div class="c" style="left:921px;top:328.19px;width:85px;font-size:11px;color:#000;"><span style="position:absolute;right:3px;top:0;letter-spacing:-0.3px;">1 000</span></div>
<div class="c" style="left:1007px;top:328.19px;width:29px;font-size:11px;color:#000;"><span style="position:absolute;left:2px;top:0;">Ft</span></div>
<div class="c" style="left:1037px;top:328.19px;width:86px;font-size:11px;color:#000;"><span style="position:absolute;right:2px;top:0;">40</span></div>
<div style="left:232px;top:348px;width:11px;height:19px;background:#fbfbfc;"></div>
<div style="left:232px;top:367px;width:11px;height:1px;background:#dcdce6;"></div>
<div style="left:243px;top:348px;width:1px;height:20px;background:#dcdce6;"></div>
<div style="left:244px;top:348px;width:879px;height:20px;background:#ffffff;"></div>
<div style="left:244px;top:367px;width:879px;height:1px;background:#d9d9d9;"></div>
<div style="left:272px;top:348px;width:1px;height:19px;background:#dadada;"></div>
<div style="left:380px;top:348px;width:1px;height:19px;background:#dadada;"></div>
<div style="left:446px;top:348px;width:1px;height:19px;background:#dadada;"></div>
<div style="left:512px;top:348px;width:1px;height:19px;background:#dadada;"></div>
<div style="left:579px;top:348px;width:1px;height:19px;background:#dadada;"></div>
<div style="left:746px;top:348px;width:1px;height:19px;background:#dadada;"></div>
<div style="left:833px;top:348px;width:1px;height:19px;background:#dadada;"></div>
<div style="left:920px;top:348px;width:1px;height:19px;background:#dadada;"></div>
<div style="left:1006px;top:348px;width:1px;height:19px;background:#dadada;"></div>
<div style="left:1036px;top:348px;width:1px;height:19px;background:#dadada;"></div>
<div style="left:251px;top:351px;width:13px;height:13px;background:#fff;border:1px solid #c4e2bc;box-sizing:border-box;"></div>
<div class="c" style="left:273px;top:348.19px;width:107px;font-size:11px;color:#000;"><span style="position:absolute;left:1.5px;top:0;letter-spacing:-0.28px;">ZEL-1-000004-Z</span></div>
<div class="c" style="left:381px;top:348.19px;width:65px;font-size:11px;color:#000;"><span style="position:absolute;left:2px;top:0;">2021.04.14</span></div>
<div class="c" style="left:447px;top:348.19px;width:65px;font-size:11px;color:#000;"><span style="position:absolute;left:2px;top:0;">2021.04.14</span></div>
<div class="c" style="left:513px;top:348.19px;width:66px;font-size:11px;color:#000;"><span style="position:absolute;left:2px;top:0;transform:scaleX(0.9181818181818182);transform-origin:0 0;">NAV 3 - HO - </span></div>
<div class="c" style="left:747px;top:348.19px;width:86px;font-size:11px;color:#000;"><span style="position:absolute;right:3px;top:0;letter-spacing:-0.3px;">2 000</span></div>
<div class="c" style="left:834px;top:348.19px;width:86px;font-size:11px;color:#000;"><span style="position:absolute;right:3px;top:0;">0</span></div>
<div class="c" style="left:921px;top:348.19px;width:85px;font-size:11px;color:#000;"><span style="position:absolute;right:3px;top:0;letter-spacing:-0.3px;">2 000</span></div>
<div class="c" style="left:1007px;top:348.19px;width:29px;font-size:11px;color:#000;"><span style="position:absolute;left:2px;top:0;">Ft</span></div>
<div class="c" style="left:1037px;top:348.19px;width:86px;font-size:11px;color:#000;"><span style="position:absolute;right:2px;top:0;">34</span></div>
<div style="left:232px;top:368px;width:11px;height:19px;background:#fbfbfc;"></div>
<div style="left:232px;top:387px;width:11px;height:1px;background:#dcdce6;"></div>
<div style="left:243px;top:368px;width:1px;height:20px;background:#dcdce6;"></div>
<div style="left:244px;top:368px;width:879px;height:20px;background:#d9d9d9;"></div>
<div style="left:244px;top:387px;width:879px;height:1px;background:#d9d9d9;"></div>
<div style="left:251px;top:371px;width:13px;height:13px;background:#fff;border:1px solid #c4e2bc;box-sizing:border-box;"></div>
<div class="c" style="left:273px;top:368.19px;width:107px;font-size:11px;color:#000;"><span style="position:absolute;left:1.5px;top:0;letter-spacing:-0.31px;">ELSZ-21-1-000008</span></div>
<div class="c" style="left:381px;top:368.19px;width:65px;font-size:11px;color:#000;"><span style="position:absolute;left:2px;top:0;">2021.04.14</span></div>
<div class="c" style="left:447px;top:368.19px;width:65px;font-size:11px;color:#000;"><span style="position:absolute;left:2px;top:0;">2021.04.14</span></div>
<div class="c" style="left:513px;top:368.19px;width:66px;font-size:11px;color:#000;"><span style="position:absolute;left:2px;top:0;transform:scaleX(0.9181818181818182);transform-origin:0 0;">NAV 3 - MAGYAR</span></div>
<div class="c" style="left:747px;top:368.19px;width:86px;font-size:11px;color:#000;"><span style="position:absolute;right:3px;top:0;letter-spacing:-0.3px;">10 000</span></div>
<div class="c" style="left:834px;top:368.19px;width:86px;font-size:11px;color:#000;"><span style="position:absolute;right:3px;top:0;">0</span></div>
<div class="c" style="left:921px;top:368.19px;width:85px;font-size:11px;color:#000;"><span style="position:absolute;right:3px;top:0;letter-spacing:-0.3px;">10 000</span></div>
<div class="c" style="left:1007px;top:368.19px;width:29px;font-size:11px;color:#000;"><span style="position:absolute;left:2px;top:0;">Ft</span></div>
<div class="c" style="left:1037px;top:368.19px;width:86px;font-size:11px;color:#000;"><span style="position:absolute;right:2px;top:0;">34</span></div>
<div style="left:232px;top:388px;width:11px;height:19px;background:#fbfbfc;"></div>
<div style="left:232px;top:407px;width:11px;height:1px;background:#dcdce6;"></div>
<div style="left:243px;top:388px;width:1px;height:20px;background:#dcdce6;"></div>
<div style="left:244px;top:388px;width:879px;height:20px;background:#ffffff;"></div>
<div style="left:244px;top:407px;width:879px;height:1px;background:#d9d9d9;"></div>
<div style="left:272px;top:388px;width:1px;height:19px;background:#dadada;"></div>
<div style="left:380px;top:388px;width:1px;height:19px;background:#dadada;"></div>
<div style="left:446px;top:388px;width:1px;height:19px;background:#dadada;"></div>
<div style="left:512px;top:388px;width:1px;height:19px;background:#dadada;"></div>
<div style="left:579px;top:388px;width:1px;height:19px;background:#dadada;"></div>
<div style="left:746px;top:388px;width:1px;height:19px;background:#dadada;"></div>
<div style="left:833px;top:388px;width:1px;height:19px;background:#dadada;"></div>
<div style="left:920px;top:388px;width:1px;height:19px;background:#dadada;"></div>
<div style="left:1006px;top:388px;width:1px;height:19px;background:#dadada;"></div>
<div style="left:1036px;top:388px;width:1px;height:19px;background:#dadada;"></div>
<div style="left:251px;top:391px;width:13px;height:13px;background:#fff;border:1px solid #c4e2bc;box-sizing:border-box;"></div>
<div class="c" style="left:273px;top:388.19px;width:107px;font-size:11px;color:#000;"><span style="position:absolute;left:1.5px;top:0;letter-spacing:-0.28px;">ZEL-1-000001-Z</span></div>
<div class="c" style="left:381px;top:388.19px;width:65px;font-size:11px;color:#000;"><span style="position:absolute;left:2px;top:0;">2021.04.14</span></div>
<div class="c" style="left:447px;top:388.19px;width:65px;font-size:11px;color:#000;"><span style="position:absolute;left:2px;top:0;">2021.04.14</span></div>
<div class="c" style="left:513px;top:388.19px;width:66px;font-size:11px;color:#000;"><span style="position:absolute;left:2px;top:0;transform:scaleX(0.9181818181818182);transform-origin:0 0;">NAV 3 - MAGYAR</span></div>
<div class="c" style="left:747px;top:388.19px;width:86px;font-size:11px;color:#000;"><span style="position:absolute;right:3px;top:0;letter-spacing:-0.3px;">1 000</span></div>
<div class="c" style="left:834px;top:388.19px;width:86px;font-size:11px;color:#000;"><span style="position:absolute;right:3px;top:0;">0</span></div>
<div class="c" style="left:921px;top:388.19px;width:85px;font-size:11px;color:#000;"><span style="position:absolute;right:3px;top:0;letter-spacing:-0.3px;">1 000</span></div>
<div class="c" style="left:1007px;top:388.19px;width:29px;font-size:11px;color:#000;"><span style="position:absolute;left:2px;top:0;">Ft</span></div>
<div class="c" style="left:1037px;top:388.19px;width:86px;font-size:11px;color:#000;"><span style="position:absolute;right:2px;top:0;">34</span></div>
<div style="left:232px;top:408px;width:11px;height:19px;background:#fbfbfc;"></div>
<div style="left:232px;top:427px;width:11px;height:1px;background:#dcdce6;"></div>
<div style="left:243px;top:408px;width:1px;height:20px;background:#dcdce6;"></div>
<div style="left:244px;top:408px;width:879px;height:20px;background:#d9d9d9;"></div>
<div style="left:244px;top:427px;width:879px;height:1px;background:#d9d9d9;"></div>
<div style="left:251px;top:411px;width:13px;height:13px;background:#fff;border:1px solid #c4e2bc;box-sizing:border-box;"></div>
<div class="c" style="left:273px;top:408.19px;width:107px;font-size:11px;color:#000;"><span style="position:absolute;left:1.5px;top:0;letter-spacing:-0.28px;">ZEL-1-000005-Z</span></div>
<div class="c" style="left:381px;top:408.19px;width:65px;font-size:11px;color:#000;"><span style="position:absolute;left:2px;top:0;">2021.04.15</span></div>
<div class="c" style="left:447px;top:408.19px;width:65px;font-size:11px;color:#000;"><span style="position:absolute;left:2px;top:0;">2021.04.15</span></div>
<div class="c" style="left:513px;top:408.19px;width:66px;font-size:11px;color:#000;"><span style="position:absolute;left:2px;top:0;transform:scaleX(0.9181818181818182);transform-origin:0 0;">NAV 3 - MAGYAR</span></div>
<div class="c" style="left:747px;top:408.19px;width:86px;font-size:11px;color:#000;"><span style="position:absolute;right:3px;top:0;letter-spacing:-0.3px;">1 000</span></div>
<div class="c" style="left:834px;top:408.19px;width:86px;font-size:11px;color:#000;"><span style="position:absolute;right:3px;top:0;">0</span></div>
<div class="c" style="left:921px;top:408.19px;width:85px;font-size:11px;color:#000;"><span style="position:absolute;right:3px;top:0;letter-spacing:-0.3px;">1 000</span></div>
<div class="c" style="left:1007px;top:408.19px;width:29px;font-size:11px;color:#000;"><span style="position:absolute;left:2px;top:0;">Ft</span></div>
<div class="c" style="left:1037px;top:408.19px;width:86px;font-size:11px;color:#000;"><span style="position:absolute;right:2px;top:0;">33</span></div>
<div style="left:232px;top:428px;width:11px;height:19px;background:#fbfbfc;"></div>
<div style="left:232px;top:447px;width:11px;height:1px;background:#dcdce6;"></div>
<div style="left:243px;top:428px;width:1px;height:20px;background:#dcdce6;"></div>
<div style="left:244px;top:428px;width:879px;height:20px;background:#ffffff;"></div>
<div style="left:244px;top:447px;width:879px;height:1px;background:#d9d9d9;"></div>
<div style="left:272px;top:428px;width:1px;height:19px;background:#dadada;"></div>
<div style="left:380px;top:428px;width:1px;height:19px;background:#dadada;"></div>
<div style="left:446px;top:428px;width:1px;height:19px;background:#dadada;"></div>
<div style="left:512px;top:428px;width:1px;height:19px;background:#dadada;"></div>
<div style="left:579px;top:428px;width:1px;height:19px;background:#dadada;"></div>
<div style="left:746px;top:428px;width:1px;height:19px;background:#dadada;"></div>
<div style="left:833px;top:428px;width:1px;height:19px;background:#dadada;"></div>
<div style="left:920px;top:428px;width:1px;height:19px;background:#dadada;"></div>
<div style="left:1006px;top:428px;width:1px;height:19px;background:#dadada;"></div>
<div style="left:1036px;top:428px;width:1px;height:19px;background:#dadada;"></div>
<div style="left:251px;top:431px;width:13px;height:13px;background:#fff;border:1px solid #c4e2bc;box-sizing:border-box;"></div>
<div class="c" style="left:273px;top:428.19px;width:107px;font-size:11px;color:#000;"><span style="position:absolute;left:1.5px;top:0;letter-spacing:-0.28px;">ZEL-1-000006-Z</span></div>
<div class="c" style="left:381px;top:428.19px;width:65px;font-size:11px;color:#000;"><span style="position:absolute;left:2px;top:0;">2021.04.15</span></div>
<div class="c" style="left:447px;top:428.19px;width:65px;font-size:11px;color:#000;"><span style="position:absolute;left:2px;top:0;">2021.05.06</span></div>
<div class="c" style="left:513px;top:428.19px;width:66px;font-size:11px;color:#000;"><span style="position:absolute;left:2px;top:0;transform:scaleX(0.9181818181818182);transform-origin:0 0;">NAV 3 - MAGYAR</span></div>
<div class="c" style="left:747px;top:428.19px;width:86px;font-size:11px;color:#000;"><span style="position:absolute;right:3px;top:0;letter-spacing:-0.3px;">4 000</span></div>
<div class="c" style="left:834px;top:428.19px;width:86px;font-size:11px;color:#000;"><span style="position:absolute;right:3px;top:0;">0</span></div>
<div class="c" style="left:921px;top:428.19px;width:85px;font-size:11px;color:#000;"><span style="position:absolute;right:3px;top:0;letter-spacing:-0.3px;">4 000</span></div>
<div class="c" style="left:1007px;top:428.19px;width:29px;font-size:11px;color:#000;"><span style="position:absolute;left:2px;top:0;">Ft</span></div>
<div class="c" style="left:1037px;top:428.19px;width:86px;font-size:11px;color:#000;"><span style="position:absolute;right:2px;top:0;">12</span></div>
<div style="left:232px;top:448px;width:11px;height:19px;background:#fbfbfc;"></div>
<div style="left:232px;top:467px;width:11px;height:1px;background:#dcdce6;"></div>
<div style="left:243px;top:448px;width:1px;height:20px;background:#dcdce6;"></div>
<div style="left:244px;top:448px;width:879px;height:20px;background:#d9d9d9;"></div>
<div style="left:244px;top:467px;width:879px;height:1px;background:#d9d9d9;"></div>
<div style="left:251px;top:451px;width:13px;height:13px;background:#fff;border:1px solid #c4e2bc;box-sizing:border-box;"></div>
<div class="c" style="left:273px;top:448.19px;width:107px;font-size:11px;color:#000;"><span style="position:absolute;left:1.5px;top:0;letter-spacing:-0.28px;">ZEL-1-000012-Z</span></div>
<div class="c" style="left:381px;top:448.19px;width:65px;font-size:11px;color:#000;"><span style="position:absolute;left:2px;top:0;">2021.04.16</span></div>
<div class="c" style="left:447px;top:448.19px;width:65px;font-size:11px;color:#000;"><span style="position:absolute;left:2px;top:0;">2021.04.16</span></div>
<div class="c" style="left:513px;top:448.19px;width:66px;font-size:11px;color:#000;"><span style="position:absolute;left:2px;top:0;transform:scaleX(0.8478260869565217);transform-origin:0 0;">BLOKKOS ELADÁS</span></div>
<div class="c" style="left:747px;top:448.19px;width:86px;font-size:11px;color:#000;"><span style="position:absolute;right:3px;top:0;letter-spacing:-0.3px;">1 000</span></div>
<div class="c" style="left:834px;top:448.19px;width:86px;font-size:11px;color:#000;"><span style="position:absolute;right:3px;top:0;">0</span></div>
<div class="c" style="left:921px;top:448.19px;width:85px;font-size:11px;color:#000;"><span style="position:absolute;right:3px;top:0;letter-spacing:-0.3px;">1 000</span></div>
<div class="c" style="left:1007px;top:448.19px;width:29px;font-size:11px;color:#000;"><span style="position:absolute;left:2px;top:0;">Ft</span></div>
<div class="c" style="left:1037px;top:448.19px;width:86px;font-size:11px;color:#000;"><span style="position:absolute;right:2px;top:0;">32</span></div>
<div style="left:232px;top:468px;width:11px;height:19px;background:#fbfbfc;"></div>
<div style="left:232px;top:487px;width:11px;height:1px;background:#dcdce6;"></div>
<div style="left:243px;top:468px;width:1px;height:20px;background:#dcdce6;"></div>
<div style="left:244px;top:468px;width:879px;height:20px;background:#ffffff;"></div>
<div style="left:244px;top:487px;width:879px;height:1px;background:#d9d9d9;"></div>
<div style="left:272px;top:468px;width:1px;height:19px;background:#dadada;"></div>
<div style="left:380px;top:468px;width:1px;height:19px;background:#dadada;"></div>
<div style="left:446px;top:468px;width:1px;height:19px;background:#dadada;"></div>
<div style="left:512px;top:468px;width:1px;height:19px;background:#dadada;"></div>
<div style="left:579px;top:468px;width:1px;height:19px;background:#dadada;"></div>
<div style="left:746px;top:468px;width:1px;height:19px;background:#dadada;"></div>
<div style="left:833px;top:468px;width:1px;height:19px;background:#dadada;"></div>
<div style="left:920px;top:468px;width:1px;height:19px;background:#dadada;"></div>
<div style="left:1006px;top:468px;width:1px;height:19px;background:#dadada;"></div>
<div style="left:1036px;top:468px;width:1px;height:19px;background:#dadada;"></div>
<div style="left:251px;top:471px;width:13px;height:13px;background:#fff;border:1px solid #c4e2bc;box-sizing:border-box;"></div>
<div class="c" style="left:273px;top:468.19px;width:107px;font-size:11px;color:#000;"><span style="position:absolute;left:1.5px;top:0;letter-spacing:-0.28px;">ZEL-1-000013-Z</span></div>
<div class="c" style="left:381px;top:468.19px;width:65px;font-size:11px;color:#000;"><span style="position:absolute;left:2px;top:0;">2021.04.19</span></div>
<div class="c" style="left:447px;top:468.19px;width:65px;font-size:11px;color:#000;"><span style="position:absolute;left:2px;top:0;">2021.04.19</span></div>
<div class="c" style="left:513px;top:468.19px;width:66px;font-size:11px;color:#000;"><span style="position:absolute;left:2px;top:0;transform:scaleX(0.9181818181818182);transform-origin:0 0;">NAV 3 - MAGYAR</span></div>
<div class="c" style="left:747px;top:468.19px;width:86px;font-size:11px;color:#000;"><span style="position:absolute;right:3px;top:0;letter-spacing:-0.3px;">10 000</span></div>
<div class="c" style="left:834px;top:468.19px;width:86px;font-size:11px;color:#000;"><span style="position:absolute;right:3px;top:0;">0</span></div>
<div class="c" style="left:921px;top:468.19px;width:85px;font-size:11px;color:#000;"><span style="position:absolute;right:3px;top:0;letter-spacing:-0.3px;">10 000</span></div>
<div class="c" style="left:1007px;top:468.19px;width:29px;font-size:11px;color:#000;"><span style="position:absolute;left:2px;top:0;">Ft</span></div>
<div class="c" style="left:1037px;top:468.19px;width:86px;font-size:11px;color:#000;"><span style="position:absolute;right:2px;top:0;">29</span></div>
<div style="left:232px;top:488px;width:11px;height:19px;background:#fbfbfc;"></div>
<div style="left:232px;top:507px;width:11px;height:1px;background:#dcdce6;"></div>
<div style="left:243px;top:488px;width:1px;height:20px;background:#dcdce6;"></div>
<div style="left:244px;top:488px;width:879px;height:20px;background:#0078d7;"></div>
<div style="left:244px;top:507px;width:879px;height:1px;background:#e4e4ea;"></div>
<div style="left:272px;top:488px;width:1px;height:19px;background:#d8d8e0;"></div>
<div style="left:380px;top:488px;width:1px;height:19px;background:#d8d8e0;"></div>
<div style="left:446px;top:488px;width:1px;height:19px;background:#d8d8e0;"></div>
<div style="left:512px;top:488px;width:1px;height:19px;background:#d8d8e0;"></div>
<div style="left:579px;top:488px;width:1px;height:19px;background:#d8d8e0;"></div>
<div style="left:746px;top:488px;width:1px;height:19px;background:#d8d8e0;"></div>
<div style="left:833px;top:488px;width:1px;height:19px;background:#d8d8e0;"></div>
<div style="left:920px;top:488px;width:1px;height:19px;background:#d8d8e0;"></div>
<div style="left:1006px;top:488px;width:1px;height:19px;background:#d8d8e0;"></div>
<div style="left:1036px;top:488px;width:1px;height:19px;background:#d8d8e0;"></div>
<div style="left:513px;top:488px;width:66px;height:19px;background:#d4d4d4;"></div>
<div style="left:251px;top:491px;width:13px;height:13px;background:#fff;border:1px solid #b8dcb0;box-sizing:border-box;"></div>
<div class="c" style="left:273px;top:488.19px;width:107px;font-size:11px;color:#fff;"><span style="position:absolute;left:1.5px;top:0;letter-spacing:-0.36px;">ELSZ-2-000001</span></div>
<div class="c" style="left:381px;top:488.19px;width:65px;font-size:11px;color:#fff;"><span style="position:absolute;left:2px;top:0;">2021.01.18</span></div>
<div class="c" style="left:447px;top:488.19px;width:65px;font-size:11px;color:#fff;"><span style="position:absolute;left:2px;top:0;">2021.01.18</span></div>
<div class="c" style="left:513px;top:488.19px;width:66px;font-size:11px;color:#000;"><span style="position:absolute;left:2px;top:0;transform:scaleX(0.8266666666666667);transform-origin:0 0;">VXVC</span></div>
<div class="c" style="left:747px;top:488.19px;width:86px;font-size:11px;color:#fff;"><span style="position:absolute;right:3px;top:0;letter-spacing:-0.3px;">1 100</span></div>
<div class="c" style="left:834px;top:488.19px;width:86px;font-size:11px;color:#fff;"><span style="position:absolute;right:3px;top:0;">0</span></div>
<div class="c" style="left:921px;top:488.19px;width:85px;font-size:11px;color:#fff;"><span style="position:absolute;right:3px;top:0;letter-spacing:-0.3px;">1 100</span></div>
<div class="c" style="left:1007px;top:488.19px;width:29px;font-size:11px;color:#fff;"><span style="position:absolute;left:2px;top:0;">Ft</span></div>
<div class="c" style="left:1037px;top:488.19px;width:86px;font-size:11px;color:#fff;"><span style="position:absolute;right:2px;top:0;">120</span></div>
<svg style="left:235px;top:493px;width:6px;height:9px" width="6" height="9" viewBox="0 0 6 9"><path d="M1 0.5L5 4.5L1 8.5Z" fill="#707070"/></svg>
</body></html>
